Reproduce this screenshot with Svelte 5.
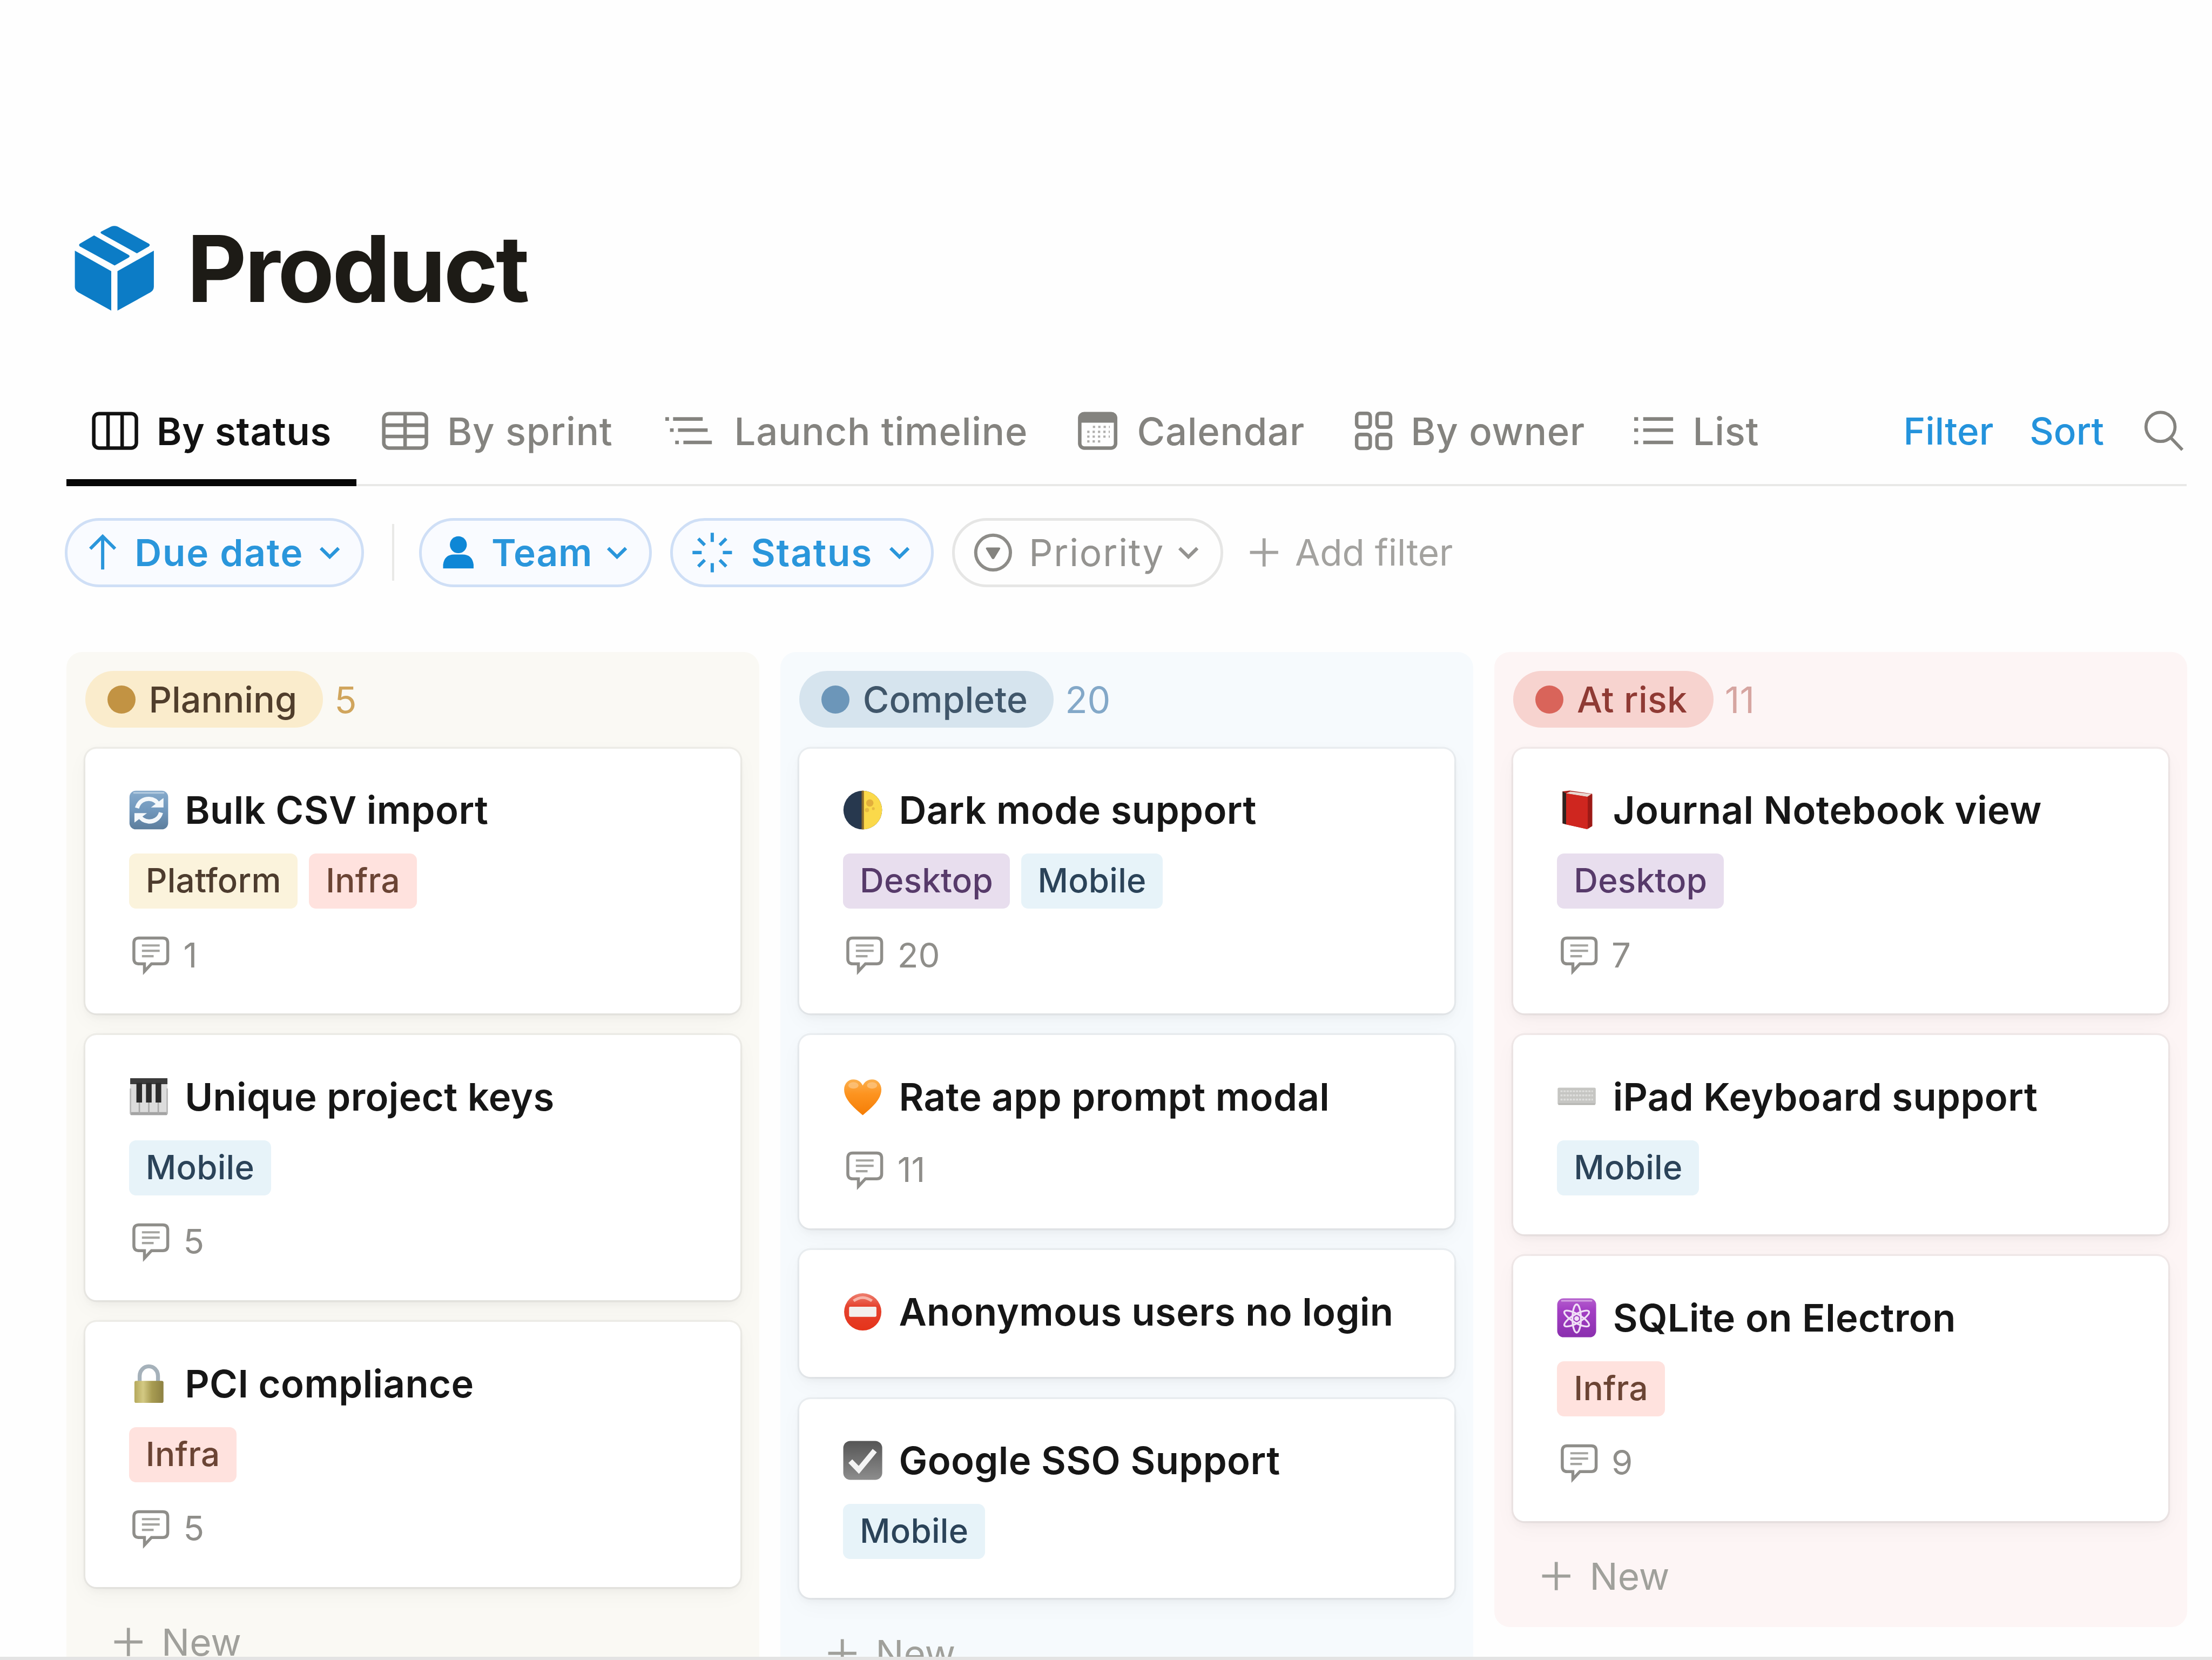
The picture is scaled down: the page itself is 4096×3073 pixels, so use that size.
<script>
  const tabs = [
    { id: 'board', label: 'By status', active: true },
    { id: 'table', label: 'By sprint' },
    { id: 'timeline', label: 'Launch timeline' },
    { id: 'calendar', label: 'Calendar' },
    { id: 'gallery', label: 'By owner' },
    { id: 'list', label: 'List' }
  ];

  const columns = [
    {
      tone: 'yellow', name: 'Planning', count: 5,
      cards: [
        { icon: 'sync', title: 'Bulk CSV import', tags: ['Platform', 'Infra'], comments: 1 },
        { icon: 'piano', title: 'Unique project keys', tags: ['Mobile'], comments: 5 },
        { icon: 'lock', title: 'PCI compliance', tags: ['Infra'], comments: 5 }
      ]
    },
    {
      tone: 'blue', name: 'Complete', count: 20,
      cards: [
        { icon: 'moon', title: 'Dark mode support', tags: ['Desktop', 'Mobile'], comments: 20 },
        { icon: 'heart', title: 'Rate app prompt modal', tags: [], comments: 11 },
        { icon: 'noentry', title: 'Anonymous users no login', tags: [] },
        { icon: 'check', title: 'Google SSO Support', tags: ['Mobile'] }
      ]
    },
    {
      tone: 'red', name: 'At risk', count: 11,
      cards: [
        { icon: 'book', title: 'Journal Notebook view', tags: ['Desktop'], comments: 7 },
        { icon: 'keyboard', title: 'iPad Keyboard support', tags: ['Mobile'] },
        { icon: 'atom', title: 'SQLite on Electron', tags: ['Infra'], comments: 9 }
      ]
    }
  ];
</script>

{#snippet chevron()}
  <svg class="chevron" viewBox="0 0 15 10"><path d="M1.2 1.8 7.5 8 13.8 1.8" /></svg>
{/snippet}

{#snippet plus()}
  <svg class="plus" viewBox="0 0 22 22"><path d="M11 1V21M1 11H21" /></svg>
{/snippet}

{#snippet emoji(name)}
  <svg class="emoji" viewBox="0 0 28 28">
    {#if name === 'sync'}
      <defs>
        <linearGradient id="syncBg" x1="0" y1="0" x2="0" y2="1">
          <stop offset="0" stop-color="#86aacb" /><stop offset=".5" stop-color="#7198bd" /><stop offset="1" stop-color="#5c7d9c" />
        </linearGradient>
      </defs>
      <rect x=".3" y=".3" width="27.4" height="27.4" rx="4.5" fill="url(#syncBg)" />
      <path d="M3 1.8H25" stroke="#b4cbe0" stroke-width="1.2" />
      <g fill="none" stroke="#f4f8fb" stroke-width="3">
        <path d="M5.6 12.6C7 7.6 11 5.9 14.3 6.1c3.2.2 5.3 1.7 6.5 4" />
        <path d="M22.6 15.8C21.3 20.6 17.2 22.3 13.9 22.1c-3.2-.2-5.3-1.7-6.5-4" />
      </g>
      <path d="M15.5 12.2h8.9V5.5zM12.7 16.2H3.8v6.7z" fill="#f4f8fb" />
    {:else if name === 'piano'}
      <rect x=".8" y=".8" width="26.4" height="26.4" rx="1.5" fill="#dcdcdc" />
      <path d="M1 25.8H27" stroke="#a3a3a3" stroke-width="2" />
      <path d="M7.3 3V26M14 3V26M20.7 3V26" stroke="#a9a9a9" stroke-width="1" />
      <path d="M1 8V26M27 8V26" stroke="#b5b5b5" stroke-width="1" />
      <path d="M.8 .8H27.2V5H.8z" fill="#3b3b3b" />
      <path d="M5.2 4h4V18h-4zM12 4h4V18h-4zM18.8 4h4V18h-4z" fill="#2b2b2b" />
    {:else if name === 'lock'}
      <defs>
        <linearGradient id="lockBody" x1="0" y1="0" x2="1" y2="0">
          <stop offset="0" stop-color="#b5a95c" /><stop offset=".3" stop-color="#d3c983" /><stop offset=".6" stop-color="#a89c52" /><stop offset="1" stop-color="#8d8142" />
        </linearGradient>
      </defs>
      <path d="M7.5 13V8.500a6.500 6.800 0 0 1 13 0V13" fill="none" stroke="#a5b1ba" stroke-width="2.8" />
      <rect x="3.8" y="12" width="20.6" height="15.6" rx="1.2" fill="url(#lockBody)" />
    {:else if name === 'moon'}
      <circle cx="14" cy="14" r="13.7" fill="#27384e" />
      <path d="M14 .3a13.7 13.7 0 0 1 0 27.4z" fill="#fbd94a" />
      <path d="M14 .3v27.4" stroke="#8a6a2c" stroke-width="1.6" />
      <circle cx="19" cy="9" r="2.6" fill="#e2ae3c" /><circle cx="17" cy="14" r="1.5" fill="#e7ba41" />
      <circle cx="21.5" cy="13" r="1" fill="#e7ba41" />
    {:else if name === 'heart'}
      <defs>
        <linearGradient id="heartFill" x1="0" y1="0" x2="0" y2="1">
          <stop offset="0" stop-color="#fbb04f" /><stop offset=".4" stop-color="#fd9420" /><stop offset="1" stop-color="#f57d05" />
        </linearGradient>
      </defs>
      <path d="M14 27C9 22.500 .8 16.500 .8 8.800.8 4.500 3.700 1.600 7.400 1.600c3 0 5.300 1.500 6.600 4.300 1.300-2.800 3.600-4.300 6.600-4.300 3.700 0 6.600 2.900 6.600 7.200C27.200 16.500 19 22.500 14 27z" fill="url(#heartFill)" />
      <ellipse cx="7.4" cy="5.8" rx="3.6" ry="2.3" fill="#fcc887" opacity=".7" />
      <ellipse cx="20.6" cy="5.8" rx="3.6" ry="2.3" fill="#fcc887" opacity=".7" />
    {:else if name === 'noentry'}
      <defs>
        <linearGradient id="stopFill" x1="0" y1="0" x2="0" y2="1">
          <stop offset="0" stop-color="#ee8070" /><stop offset=".35" stop-color="#e5432f" /><stop offset="1" stop-color="#e5331a" />
        </linearGradient>
      </defs>
      <circle cx="14" cy="14" r="13.2" fill="url(#stopFill)" />
      <path d="M7.5 6.2Q14 1.500 20.500 6.200" fill="none" stroke="#f7b4a8" stroke-width="2" />
      <rect x="4.3" y="10.3" width="19.4" height="7.2" rx=".8" fill="#f3efed" />
    {:else if name === 'check'}
      <defs>
        <linearGradient id="checkBg" x1="0" y1="0" x2="0" y2="1">
          <stop offset="0" stop-color="#555" /><stop offset="1" stop-color="#8d8d8d" />
        </linearGradient>
      </defs>
      <rect x=".2" y=".2" width="27.6" height="27.6" rx="5" fill="url(#checkBg)" />
      <path d="M5.2 14.5 11.2 20.7 22.5 7" fill="none" stroke="#f4f4f4" stroke-width="3.8" />
    {:else if name === 'book'}
      <path d="M4 .8 9 .2 25 2.500V25.500L21 27.500 4 23.500z" fill="#a81f1a" />
      <path d="M4 .8 6.500 2.200V24.200L4 23.400z" fill="#2d2421" />
      <path d="M6.500 2.200 9.500 .9 24.500 2.600 21.500 4.600z" fill="#e9d9d2" />
      <path d="M6.500 2.200 21.800 4.700V27.600L6.500 24.200z" fill="#cf261f" />
      <path d="M22 5 25 3V25.200L22 27.400z" fill="#9c1a16" />
    {:else if name === 'keyboard'}
      <rect x=".5" y="7.5" width="27" height="12" rx="1" fill="#c6c6c3" />
      <path d="M1 19.2H27" stroke="#b2b2ae" stroke-width="1" />
      <path d="M2.5 10H25.5M2.5 12.9H25.5M2.5 15.9H25.5" stroke="#dededc" stroke-width="1.3" stroke-dasharray="1.5 .7" />
    {:else if name === 'atom'}
      <defs>
        <linearGradient id="atomBg" x1="0" y1="0" x2="0" y2="1">
          <stop offset="0" stop-color="#b45ecd" /><stop offset=".3" stop-color="#a33fc4" /><stop offset="1" stop-color="#8a2fae" />
        </linearGradient>
      </defs>
      <rect x=".2" y=".2" width="27.6" height="27.6" rx="4.5" fill="url(#atomBg)" />
      <path d="M3 1.9H25" stroke="#d3a0e2" stroke-width="1.1" />
      <g fill="none" stroke="#f0dff6" stroke-width="1.3">
        <ellipse cx="14" cy="14.5" rx="3" ry="10" />
        <ellipse cx="14" cy="14.5" rx="3" ry="10" transform="rotate(60 14 14.5)" />
        <ellipse cx="14" cy="14.5" rx="3" ry="10" transform="rotate(120 14 14.5)" />
      </g>
      <circle cx="14" cy="14.5" r="1.7" fill="#f0dff6" />
    {/if}
  </svg>
{/snippet}

{#snippet tabIcon(id)}
  {#if id === 'board'}
    <svg class="ico wide" viewBox="0 0 33 28"><rect x="1.4" y="1.8" width="30.2" height="24.4" rx="3.6" /><path d="M11.5 2V26M21.5 2V26" /></svg>
  {:else if id === 'table'}
    <svg class="ico wide" viewBox="0 0 33 28"><rect x="1.4" y="1.8" width="30.2" height="24.4" rx="3.6" /><path d="M16.5 2V26M1.5 10H31.5M1.5 18H31.5" /></svg>
  {:else if id === 'timeline'}
    <svg class="ico wide" viewBox="0 0 33 28"><path d="M5.5 5.6H26.5M9 13.5H30M12.8 22.2H33M0 5.6H2.6M3.3 13.5H5.9M7 22.2H9.6" /></svg>
  {:else if id === 'calendar'}
    <svg class="ico" viewBox="0 0 28 28">
      <rect x="1.3" y="1.8" width="25.4" height="24.4" rx="3.2" />
      <path class="solid" d="M1 8.2V4.500Q1 1.500 4.500 1.500H23.500Q27 1.500 27 4.500V8.200z" />
      <path class="dots" d="M10.6 11.2H22.600M6.600 14.700H22.600M6.600 18.100H22.600M6.600 21.500H18" />
    </svg>
  {:else if id === 'gallery'}
    <svg class="ico" viewBox="0 0 28 28">
      <rect x="1.6" y="1.6" width="9.6" height="9.8" rx="2.2" /><rect x="16" y="1.6" width="9.6" height="9.8" rx="2.2" />
      <rect x="1.6" y="16.6" width="9.6" height="9.8" rx="2.2" /><rect x="16" y="16.6" width="9.6" height="9.8" rx="2.2" />
    </svg>
  {:else}
    <svg class="ico" viewBox="0 0 28 28"><path d="M6.8 5.6H28M6.8 13.5H28M6.8 22.2H28M.4 5.6H3.2M.4 13.5H3.2M.4 22.2H3.2" /></svg>
  {/if}
{/snippet}

<main class="page">
  <header class="heading">
    <svg class="logo" viewBox="0 0 58 61">
      <path d="M1 18 26.8 32.5V60.5L3.5 47.6Q1 46 1 43.5z" />
      <path d="M57 18 31.2 32.5V60.5L54.5 47.6Q57 46 57 43.5z" />
      <path d="M14.6 7.2 39 21Q40.6 22 39 23L29.2 28.5 4.6 15Q3.4 14 4.6 13z" />
      <path d="M19.8 4.4 26.6 1Q29 0 31.4 1L53.4 13Q54.8 14 53.4 15L45 19.9 20 6Q18.6 5.2 19.8 4.4z" />
    </svg>
    <h1>Product</h1>
  </header>

  <nav class="tabs">
    {#each tabs as t}
      <div class="tab tab-{t.id}" class:active={t.active}>
        {@render tabIcon(t.id)}
        <span>{t.label}</span>
      </div>
    {/each}
    <div class="actions">
      <span>Filter</span>
      <span class="sort">Sort</span>
      <svg class="search" viewBox="0 0 30 30"><circle cx="12.5" cy="12" r="10.3" /><path d="M19.8 19.7 28 28.2" /></svg>
    </div>
  </nav>

  <div class="filters">
    <div class="pill due">
      <svg class="pic" viewBox="0 0 20 26"><path d="M10 25V1.8M1.2 10.3 10 1.5 18.8 10.3" /></svg>
      <span>Due date</span>{@render chevron()}
    </div>
    <i class="divider"></i>
    <div class="pill team">
      <svg class="pic" viewBox="0 0 22 26"><g class="fill"><circle cx="11" cy="7.4" r="6" /><path d="M.2 24.2V21.5Q1.2 14.4 8 14.4H14Q20.8 14.4 21.8 21.5V24.2z" /></g></svg>
      <span>Team</span>{@render chevron()}
    </div>
    <div class="pill status">
      <svg class="pic" viewBox="0 0 29 29"><path d="M14.5 .5V7M14.5 22V28.5M.5 14.5H7M22 14.5H28.5M4.6 4.6 9.2 9.2M19.8 19.8 24.4 24.4M24.4 4.6 19.8 9.2M9.2 19.8 4.6 24.4" /></svg>
      <span>Status</span>{@render chevron()}
    </div>
    <div class="pill priority">
      <svg class="pic" viewBox="0 0 29 29"><circle cx="14.5" cy="14.5" r="12.3" /><path class="fill" d="M10.2 10.9H18.8Q20 11 19.400 12.100L15.400 18.700Q14.500 19.700 13.600 18.700L9.600 12.100Q9 11 10.200 10.900z" /></svg>
      <span>Priority</span>{@render chevron()}
    </div>
    <div class="add">{@render plus()}<span>Add filter</span></div>
  </div>

  <section class="board">
    {#each columns as col}
      <div class="column {col.tone}">
        <div class="colhead">
          <div class="badge"><i class="dot"></i><span>{col.name}</span></div>
          <span class="count">{col.count}</span>
        </div>
        <div class="cards">
          {#each col.cards as card}
            <article class="card">
              <div class="title">{@render emoji(card.icon)}<span>{card.title}</span></div>
              {#if card.tags.length}
                <div class="tags">
                  {#each card.tags as tag}<span class="tag {tag.toLowerCase()}">{tag}</span>{/each}
                </div>
              {/if}
              {#if card.comments}
                <div class="comments">
                  <svg viewBox="0 0 27 27">
                    <path d="M5 1.7H22Q25.5 1.7 25.5 5.2V16.5Q25.5 20 22 20H14L9 25.3V20H5Q1.5 20 1.5 16.5V5.2Q1.5 1.7 5 1.7z" />
                    <path class="lines" d="M7.2 7H19.8M7.2 10.8H19.8M7.2 14.6H15.5" />
                  </svg>
                  <span>{card.comments}</span>
                </div>
              {/if}
            </article>
          {/each}
        </div>
        <div class="new">{@render plus()}<span>New</span></div>
      </div>
    {/each}
  </section>
  <footer class="edge"></footer>
</main>

<style>
  /* 0.1rem is one layout unit; the page is 1568 units wide. */
  :global(html) { font-size: 26.122px; }
  :global(body) { background: #fff; }

  .page {
    box-sizing: border-box;
    display: flex;
    flex-direction: column;
    width: 4096px;
    height: 3073px;
    overflow: hidden;
    background: #fefefe;
    font-family: Inter, "Liberation Sans", sans-serif;
    font-size: 2.65rem;
    white-space: nowrap;
    color: #84837f;
  }
  svg { display: block; flex: none; fill: none; overflow: visible; }

  .heading { display: flex; align-items: center; gap: 2.25rem; height: 6.1rem; padding: 15.95rem 0 0 5.2rem; flex: none; }
  .logo { width: 5.8rem; height: 6.1rem; fill: #0c7cc6; }
  h1 { margin: 0; padding-top: 0.05rem; font-size: 6.55rem; line-height: 6.1rem; font-weight: 700; letter-spacing: -0.155rem; color: #1d1b16; }

  .tabs {
    display: flex;
    flex: none;
    box-sizing: border-box;
    height: 7.65rem;
    margin: 4.75rem 1.8rem 0 4.7rem;
    border-bottom: 0.17rem solid #e9e9e7;
  }
  .tab { display: flex; align-items: center; flex: none; box-sizing: border-box; height: 7.65rem; padding: 0 0 0.15rem 1.8rem; font-size: 2.7rem; letter-spacing: 0.03rem; font-weight: 500; }
  .tab-board { width: 20.55rem; gap: 1.3rem; }
  .tab-table { width: 20.1rem; gap: 1.35rem; }
  .tab-timeline { width: 29.25rem; gap: 1.6rem; }
  .tab-calendar { width: 19.6rem; gap: 1.4rem; }
  .tab-gallery { width: 19.8rem; gap: 1.2rem; }
  .tab-list { gap: 1.4rem; }
  .tab.active { color: #111; font-weight: 600; border-bottom: 0.5rem solid #060606; padding-top: 0.5rem; }
  .ico { width: 2.8rem; height: 2.8rem; stroke: currentColor; stroke-width: 2.5; }
  .ico.wide { width: 3.3rem; }
  .solid { fill: currentColor; stroke: none; }
  .dots { stroke-width: 1.6; stroke-dasharray: 1.6 2.2; opacity: .65; }
  .actions { display: flex; align-items: center; margin-left: auto; color: #2493dc; font-weight: 500; }
  .sort { margin: 0 2.75rem 0 2.55rem; }
  .search { width: 3rem; height: 3rem; stroke: #84837f; stroke-width: 2.2; margin-right: 0.1rem; }

  .filters { display: flex; align-items: center; flex: none; height: 4.9rem; margin: 2.25rem 0 0 4.6rem; }
  .pill {
    display: flex; align-items: center; flex: none; box-sizing: border-box; height: 4.9rem;
    border: 0.2rem solid #cfdff6; border-radius: 2.45rem; background: #f9fbff;
    color: #2a96db; font-weight: 600; letter-spacing: 0.07rem;
  }
  .pic { stroke: currentColor; stroke-width: 2.3; }
  .fill { fill: #0e87d6; stroke: none; }
  .chevron { width: 1.5rem; height: 1rem; stroke: currentColor; stroke-width: 2.4; margin-left: auto; }
  .due { width: 21.2rem; padding: 0 1.5rem; }
  .due .pic { width: 2rem; height: 2.6rem; margin-right: 1.25rem; }
  .divider { width: 0.15rem; height: 4rem; background: #e9e9e7; margin: 0 1.75rem 0 2rem; }
  .team { width: 16.5rem; padding: 0 1.5rem 0 1.5rem; letter-spacing: 0.03rem; }
  .team .pic { width: 2.2rem; height: 2.6rem; margin-right: 1.25rem; }
  .status { width: 18.7rem; margin-left: 1.3rem; padding: 0 1.5rem 0 1.35rem; }
  .status .pic { width: 2.9rem; height: 2.9rem; margin-right: 1.3rem; }
  .priority { width: 19.2rem; margin-left: 1.3rem; padding: 0 1.5rem 0 1.25rem; background: #fefefe; border-color: #e6e6e5; color: #949390; font-weight: 400; }
  .priority .pic { width: 2.9rem; height: 2.9rem; margin-right: 1.1rem; stroke: #8d8c88; }
  .priority .fill { fill: #84837f; }
  .add { display: flex; align-items: center; gap: 1.1rem; margin-left: 1.8rem; font-size: 2.58rem; color: #a3a29f; }
  .plus { width: 2.2rem; height: 2.2rem; stroke: currentColor; stroke-width: 2.2; }

  .board { display: flex; align-items: flex-start; gap: 1.5rem; flex: 1; min-height: 0; overflow: hidden; margin: 4.6rem 1.75rem 0 4.7rem; }
  .column { flex: 1; box-sizing: border-box; padding: 1.35rem 1.35rem 0; height: 80rem; border-radius: 1.1rem; }
  .column.red { height: 69.1rem; }
  .colhead { display: flex; align-items: center; height: 4rem; }
  .badge { display: flex; align-items: center; gap: 0.95rem; height: 4rem; padding: 0.05rem 1.85rem 0 1.55rem; box-sizing: border-box; border-radius: 2rem; font-weight: 500; font-size: 2.54rem; }
  .dot { width: 2rem; height: 2rem; border-radius: 50%; }
  .count { margin-left: 0.8rem; padding-top: 0.05rem; font-size: 2.6rem; }
  .yellow { background: #faf9f4; }
  .yellow .badge { background: #faeccc; color: #503e2c; }
  .yellow .dot { background: #c29343; }
  .yellow .count { color: #d0a55c; }
  .blue { background: #f6fafd; }
  .blue .badge { background: #d6e4ee; color: #40566a; }
  .blue .dot { background: #6c96b9; }
  .blue .count { color: #83a8c8; }
  .red { background: #fdf5f5; }
  .red .badge { background: #f7d3cf; color: #8f3a34; letter-spacing: 0.015rem; }
  .red .dot { background: #d9645a; }
  .red .count { color: #d6a5a1; }

  .cards { display: flex; flex-direction: column; gap: 1.55rem; margin-top: 1.5rem; }
  .card {
    padding: 2.5rem 3.1rem 2.75rem; border-radius: 0.8rem; background: #fff;
    box-shadow: 0 0 0 0.13rem rgba(15, 15, 15, .05), 0 0.3rem 0.5rem rgba(15, 15, 15, .03), 0 0.5rem 1.6rem rgba(15, 15, 15, .035);
  }
  .title { display: flex; align-items: center; gap: 1.15rem; height: 3.75rem; font-size: 2.7rem; letter-spacing: 0.016rem; color: #161616; font-weight: 600; }
  .emoji { width: 2.8rem; height: 2.8rem; }
  .tags { display: flex; gap: 0.8rem; margin-top: 1.2rem; }
  .tag { height: 3.9rem; line-height: 3.85rem; padding: 0 1.18rem; border-radius: 0.5rem; font-size: 2.37rem; font-weight: 450; letter-spacing: 0.01rem; }
  .tag.platform { background: #fbf3dc; color: #4d3c2e; }
  .tag.infra { background: #ffe2de; color: #6b4434; }
  .tag.desktop { background: #e8deee; color: #573a6a; }
  .tag.mobile { background: #e7f3f9; color: #2b4359; }
  .comments { display: flex; align-items: center; gap: 0.95rem; height: 2.8rem; margin-top: 1.87rem; padding-left: 0.2rem; font-size: 2.43rem; color: #8f8e8a; }
  .comments svg { width: 2.7rem; height: 2.7rem; stroke: #8f8e8a; stroke-width: 2.1; }
  .comments .lines { stroke-width: 1.6; opacity: .8; }
  .new { display: flex; align-items: center; gap: 1.25rem; height: 4rem; margin: 1.93rem 0 0 1.95rem; color: #a0a09b; }

  .edge { flex: none; height: 0.22rem; background: #e4e4e4; }
</style>
